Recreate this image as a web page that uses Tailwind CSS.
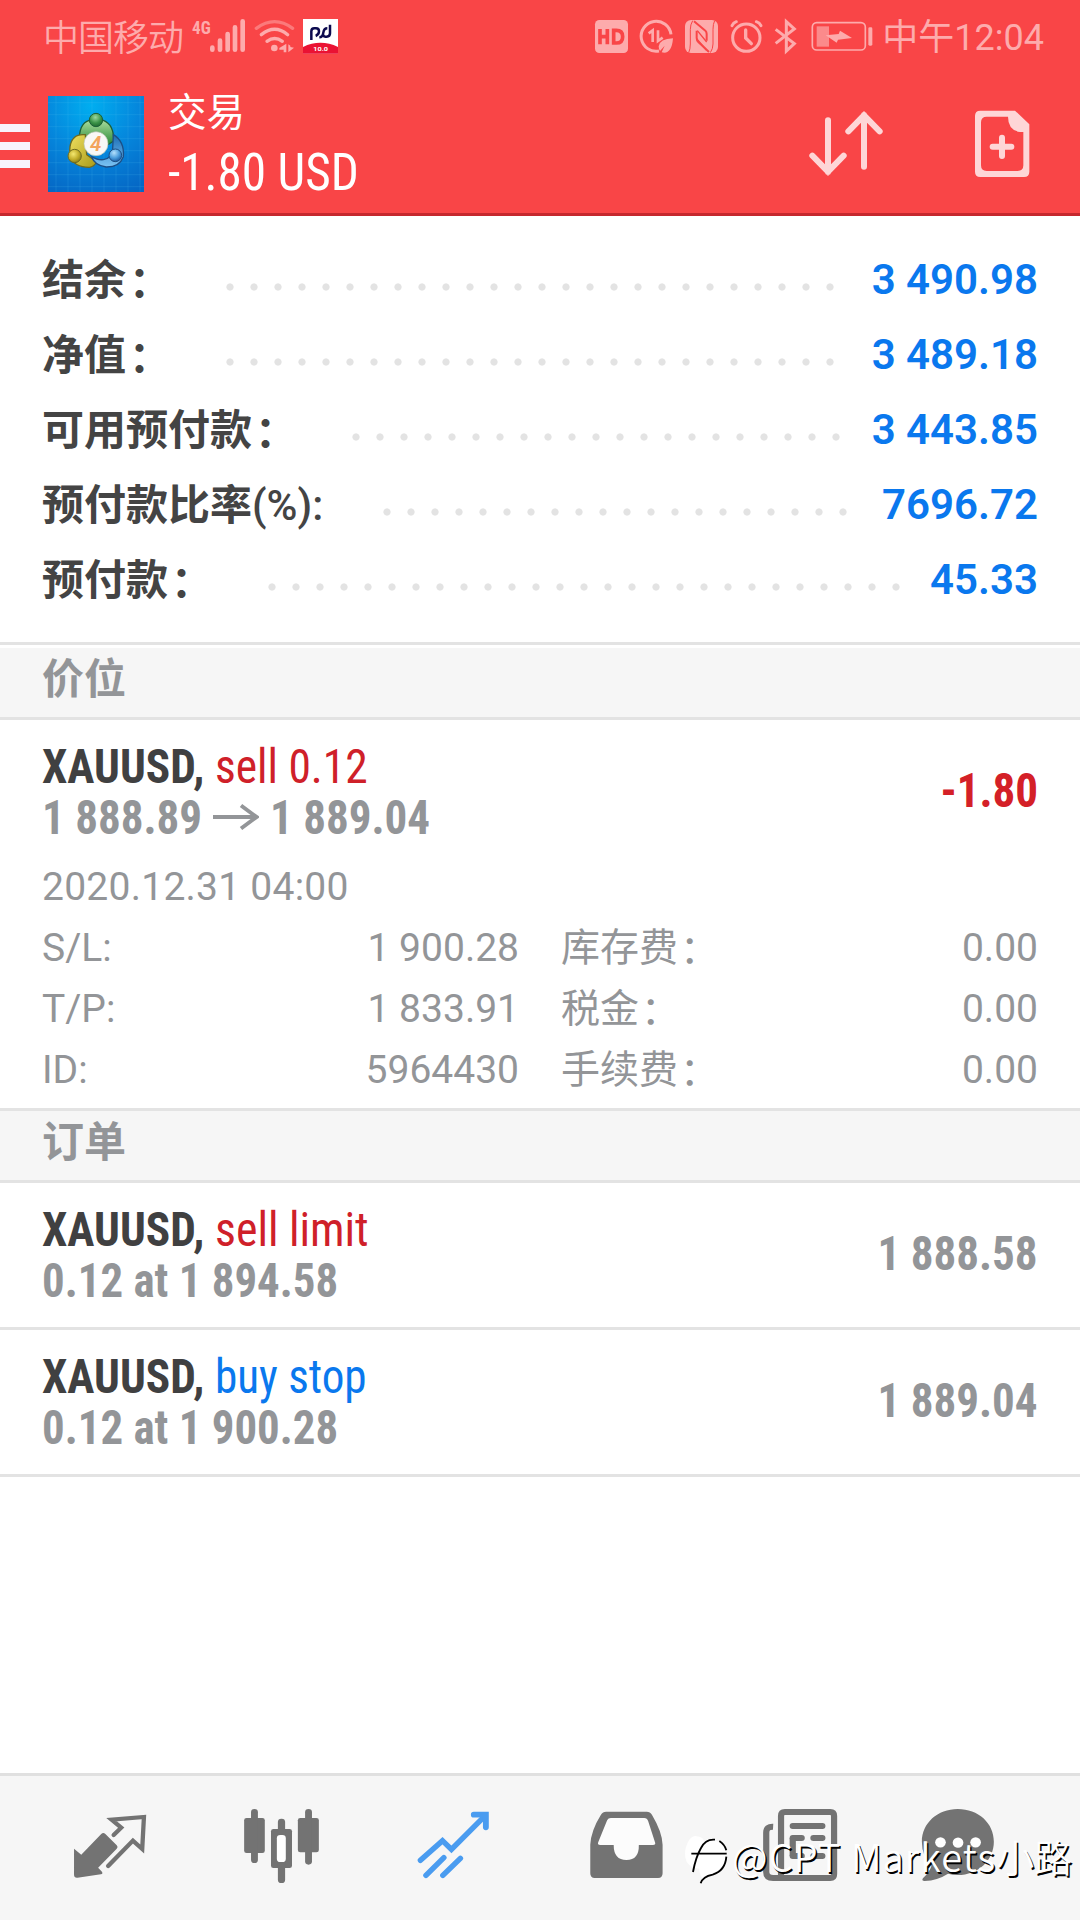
<!DOCTYPE html>
<html lang="zh-CN">
<head>
<meta charset="utf-8">
<title>交易</title>
<script src="https://cdn.jsdelivr.net/npm/@tailwindcss/browser@4"></script>
</head>
<body class="bg-white font-['Roboto','Noto_Sans_CJK_SC',sans-serif]">
<div class="relative w-[1080px] h-[1920px] overflow-hidden flex flex-col bg-white">

  <header class="h-[216px] bg-[#f94547] border-b-3 border-[#c5282e] flex flex-col shrink-0">
    <!-- status bar -->
    <div class="h-[72px] flex pl-[43px] pr-[36px] text-[#fdabac] text-[36px] leading-[76px] whitespace-nowrap">
      <span class="w-[147px] font-[350] tracking-[-1px] leading-[79px]">中国移动</span>
      <svg class="w-[150px] h-[72px] shrink-0" viewBox="570 0 450 216">
        <text x="576" y="101" font-size="57" font-weight="700" fill="#fdabac" textLength="56" lengthAdjust="spacingAndGlyphs" font-family="Roboto Condensed">4G</text>
        <g stroke="#fdabac" stroke-width="14" stroke-linecap="round" fill="none">
          <path d="M637 143v6M660 122v27M683 102v47M705 82v67M728 64v85"/>
        </g>
        <path d="M769 85Q824 45 878 85" stroke="#fb7a7b" stroke-width="10" fill="none" stroke-linecap="round"/>
        <path d="M784 104Q824 72 863 104M801 124Q824 107 847 124" stroke="#fdabac" stroke-width="10" fill="none" stroke-linecap="round"/>
        <circle cx="823" cy="144" r="10" fill="#fdabac"/>
        <path d="M859 131v26h-8v-8h-13v-5zM865 157v-24l6 4v4l11 2z" fill="#fdabac"/>
        <path d="M909 57h105v104H909z" fill="#fff"/>
        <path d="M909 161v-20Q961 116 1014 141v20z" fill="#ea1233"/>
        <path d="M934 120V94q0-9 9-9h5q9 0 9 9 0 10-10 14M958 112q10 0 12-14 2-13 12-13M975 110h5q10 0 10-10V74M976 110q-7 0-7-7" stroke="#0c0a4e" stroke-width="7.500" fill="none"/>
        <text x="940" y="153" font-size="18" font-weight="700" fill="#fff" textLength="44" lengthAdjust="spacingAndGlyphs">10.0</text>
      </svg>
      <svg class="ml-[250px] w-[290px] h-[72px] shrink-0" viewBox="90 0 870 216" fill="none">
        <rect x="105" y="60" width="99" height="99" rx="13" fill="#fdabac"/>
        <path d="M120 87v46M142 87v46M120 110h22M161 91v38h8q19 0 19-19t-19-19z" stroke="#f94547" stroke-width="11"/>
        <path d="M297 153A45 45 0 1 1 333 103" stroke="#fdabac" stroke-width="9"/>
        <path d="M266 100l12-9v35M294 91v32l14-10" stroke="#fdabac" stroke-width="8"/>
        <path d="M339 115q-40 2-43 24 0 8 4 14l14-16-9 20q30 8 34-42z" fill="#fdabac"/>
        <rect x="375" y="60" width="99" height="99" rx="18" fill="#fdabac"/>
        <path d="M398 62q-7 12-7 26v44q0 16-5 26M451 158q8-12 8-26V88q0-16 5-26" stroke="#f94547" stroke-width="3"/>
        <path d="M402 64l34 28q4 4 4 10v20M447 156l-32-30q-5-5-5-12V92" stroke="#f94547" stroke-width="6"/>
        <path d="M412 92l28 34M410 116l29 34" stroke="#f94547" stroke-width="4"/>
        <circle cx="559" cy="113" r="41" stroke="#fdabac" stroke-width="9"/>
        <path d="M516 77q4-9 13-12M589 65q10 3 14 12" stroke="#fdabac" stroke-width="9" stroke-linecap="round"/>
        <path d="M557 90v24l17 17" stroke="#fdabac" stroke-width="10" stroke-linecap="round"/>
        <path d="M647 88l56 43-24 22V65l24 22-56 43" stroke="#fdabac" stroke-width="9"/>
        <rect x="757" y="68" width="159" height="82" rx="13" stroke="#fdabac" stroke-width="5"/>
        <path d="M770 79h37v61h-37z" fill="#fb8a8b"/>
        <path d="M797 106l33 22 4-9 42-5-36-22-4 10z" fill="#fdabac"/>
        <rect x="925" y="82" width="12" height="55" rx="4" fill="#fdabac"/>
      </svg>
      <span class="ml-auto font-[390]">中午12:04</span>
    </div>

    <!-- app bar -->
    <div class="flex h-[141px] text-white">
      <div class="w-[30px] pt-[52px] flex flex-col gap-[10px]">
        <div class="h-2 bg-[#f8f3fb]"></div>
        <div class="h-2 bg-[#f8f3fb]"></div>
        <div class="h-2 bg-[#f8f3fb]"></div>
      </div>
      <svg class="ml-[18px] mt-6 w-24 h-24" viewBox="144 288 288 288">
        <defs>
          <radialGradient id="sky" cx=".45" cy=".1" r="1"><stop offset="0" stop-color="#00aef0"/><stop offset=".5" stop-color="#0586dc"/><stop offset="1" stop-color="#0566c4"/></radialGradient>
          <linearGradient id="gr" x2="0" y2="1"><stop stop-color="#a8dc9c"/><stop offset="1" stop-color="#2c8a38"/></linearGradient>
          <linearGradient id="ye" x2="1" y2="1"><stop stop-color="#f0e060"/><stop offset="1" stop-color="#a89a18"/></linearGradient>
          <linearGradient id="bl" x2="0" y2="1"><stop stop-color="#1a6cb4"/><stop offset="1" stop-color="#7cc4f4"/></linearGradient>
          <radialGradient id="gh" cx=".45" cy=".3" r=".7"><stop stop-color="#9cd8a0"/><stop offset=".6" stop-color="#3c9448"/><stop offset="1" stop-color="#1e6a30"/></radialGradient>
          <radialGradient id="yh" cx=".4" cy=".35" r=".7"><stop stop-color="#f4e870"/><stop offset=".6" stop-color="#c0ac28"/><stop offset="1" stop-color="#827a18"/></radialGradient>
          <radialGradient id="bh" cx=".4" cy=".3" r=".7"><stop stop-color="#b4e0fc"/><stop offset=".6" stop-color="#4a9cdc"/><stop offset="1" stop-color="#1c5ea4"/></radialGradient>
        </defs>
        <path fill="url(#sky)" d="M144 288h288v288H144z"/>
        <path d="M168 288v288M204 288v288M240 288v288M276 288v288M312 288v288M348 288v288M384 288v288M420 288v288M144 308h288M144 344h288M144 380h288M144 416h288M144 452h288M144 488h288M144 524h288M144 560h288" stroke="#5cc0f4" stroke-opacity=".25" stroke-width="2"/>
        <path d="M238 425q-2-55 30-64h42q32 12 31 62l-15 10-38-20-38 16z" fill="url(#gr)" stroke="#1d6038" stroke-width="4"/>
        <path d="M256 404q-40-4-46 36-2 20 2 30 10 32 56 32 14-2 22-16l-30-22z" fill="url(#ye)" stroke="#6e6a20" stroke-width="4"/>
        <path d="M340 404q34 20 30 66-12 32-52 31-34-4-44-32 20 12 36 10 26-4 28-32z" fill="url(#bl)" stroke="#1c4f86" stroke-width="4"/>
        <circle cx="288" cy="360" r="20" fill="url(#gh)" stroke="#1d6038" stroke-width="3"/>
        <circle cx="224" cy="468" r="20" fill="url(#yh)" stroke="#6e6a20" stroke-width="3"/>
        <circle cx="346" cy="466" r="19" fill="url(#bh)" stroke="#1c4f86" stroke-width="3"/>
        <circle cx="288" cy="431" r="36" fill="#f8f8f6" stroke="#b9c4b4" stroke-width="2"/>
        <text x="287" y="453" text-anchor="middle" font-size="62" font-style="italic" font-weight="600" fill="#f3a45c">4</text>
      </svg>
      <div class="ml-[24px] pt-[11px] leading-[60px] whitespace-nowrap">
        <div class="text-[38.5px]">交易</div>
        <div class="text-[51px] origin-left scale-x-[.966] font-['Roboto_Condensed','Roboto',sans-serif]">-1.80 USD</div>
      </div>
      <svg class="ml-auto mr-[20px] w-[260px] h-[141px]" viewBox="720 216 780 423" fill="none" stroke="#fed6d7">
        <path d="M804 361v155M757 467l47 48 47-48M912 500V345M865 394l47-48 47 48" stroke-width="18" stroke-linecap="round"/>
        <path fill="#fed6d7" fill-rule="evenodd" stroke="none" d="M1261 332h104l43 41v142q0 16-16 16h-131q-16 0-16-16V348q0-16 16-16zM1344 350h-64q-17 0-17 17v129q0 17 17 17h93q17 0 17-17V396h-10q-36-6-36-46z"/>
        <path d="M1326 413v55M1298 440h56" stroke-width="18" stroke-linecap="round"/>
      </svg>
    </div>
  </header>

  <!-- account summary -->
  <section class="h-[426px] shrink-0 px-[42px] pt-[26px] text-[42px] leading-[75px] font-bold text-[#444] whitespace-nowrap">
    <div class="flex h-[75px]"><span class="w-[176px] leading-[77px]">结余<span class="inline-block pl-[3px] translate-y-[2px]">：</span></span><i class="mt-[41px] h-2 w-[624px] bg-[radial-gradient(circle,#e3e3e3_3.2px,transparent_4px)] bg-[length:24px_8px]"></i><b class="ml-auto font-[640] text-[#0a78ee]">3 490.98</b></div>
    <div class="flex h-[75px]"><span class="w-[176px] leading-[77px]">净值<span class="inline-block pl-[3px] translate-y-[2px]">：</span></span><i class="mt-[41px] h-2 w-[624px] bg-[radial-gradient(circle,#e3e3e3_3.2px,transparent_4px)] bg-[length:24px_8px]"></i><b class="ml-auto font-[640] text-[#0a78ee]">3 489.18</b></div>
    <div class="flex h-[75px]"><span class="w-[302px] leading-[77px]">可用预付款<span class="inline-block pl-[3px] translate-y-[2px]">：</span></span><i class="mt-[41px] h-2 w-[504px] bg-[radial-gradient(circle,#e3e3e3_3.2px,transparent_4px)] bg-[length:24px_8px]"></i><b class="ml-auto font-[640] text-[#0a78ee]">3 443.85</b></div>
    <div class="flex h-[75px]"><span class="w-[333px] leading-[77px]">预付款比率<span class="font-medium">(%):</span></span><i class="mt-[41px] h-2 w-[480px] bg-[radial-gradient(circle,#e3e3e3_3.2px,transparent_4px)] bg-[length:24px_8px]"></i><b class="ml-auto font-[640] text-[#0a78ee]">7696.72</b></div>
    <div class="flex h-[75px]"><span class="w-[218px] leading-[77px]">预付款<span class="inline-block pl-[3px] translate-y-[2px]">：</span></span><i class="mt-[41px] h-2 w-[648px] bg-[radial-gradient(circle,#e3e3e3_3.2px,transparent_4px)] bg-[length:24px_8px]"></i><b class="ml-auto font-[640] text-[#0a78ee]">45.33</b></div>
  </section>

  <h2 class="h-[78px] shrink-0 border-y-3 border-[#e3e3e3] pt-[3px] text-[42px] leading-[63px] font-bold text-[#939598]"><span class="block h-[69px] bg-[#f6f6f6] px-[42px]">价位</span></h2>

  <!-- open position -->
  <section class="h-[388px] shrink-0 px-[42px] pt-[21px] whitespace-nowrap">
    <div class="flex items-center justify-between text-[48px] leading-[51px] font-bold font-['Roboto_Condensed','Roboto',sans-serif]">
      <div>
        <div class="flex text-[#404041]"><span class="w-[173px] origin-left scale-x-[.944]">XAUUSD,</span><span class="origin-left scale-x-[.948] font-normal text-[#cf2029]">sell 0.12</span></div>
        <div class="flex text-[#939598]"><span class="w-[171px] origin-left scale-x-[.938]">1 888.89</span><svg class="mt-[11px] w-[46px] h-[28px]" viewBox="0 0 46 28" fill="none" stroke="#939598" stroke-width="4"><path d="M0 14h43M28 2.500L43.500 14 28 25.500"/></svg><span class="ml-[11px] origin-left scale-x-[.938]">1 889.04</span></div>
      </div>
      <div class="pb-[3px] text-[#d42027] origin-right scale-x-[.938]">-1.80</div>
    </div>
    <div class="mt-[14px] text-[39px] leading-[61px] font-[390] text-[#939598]">
      <div class="tracking-[0.25px]">2020.12.31 04:00</div>
      <div class="grid grid-cols-[477px_1fr] gap-x-[42px]">
        <div class="flex justify-between"><span>S/L:</span><span>1 900.28</span></div>
        <div class="flex justify-between"><span>库存费<span class="inline-block pl-0.5 translate-y-[2px]">：</span></span><span>0.00</span></div>
        <div class="flex justify-between"><span>T/P:</span><span>1 833.91</span></div>
        <div class="flex justify-between"><span>税金<span class="inline-block pl-0.5 translate-y-[2px]">：</span></span><span>0.00</span></div>
        <div class="flex justify-between"><span>ID:</span><span>5964430</span></div>
        <div class="flex justify-between"><span>手续费<span class="inline-block pl-0.5 translate-y-[2px]">：</span></span><span>0.00</span></div>
      </div>
    </div>
  </section>

  <h2 class="h-[75px] shrink-0 border-y-3 border-[#e3e3e3] bg-[#f6f6f6] px-[42px] text-[42px] leading-[63px] font-bold text-[#939598]">订单</h2>

  <!-- pending orders -->
  <section class="shrink-0 text-[48px] leading-[51px] font-bold text-[#939598] font-['Roboto_Condensed','Roboto',sans-serif] whitespace-nowrap">
    <div class="h-[147px] border-b-3 border-[#e3e3e3] px-[42px] pt-[21px] pb-[21px] flex items-center justify-between">
      <div>
        <div class="flex text-[#404041]"><span class="w-[173px] origin-left scale-x-[.944]">XAUUSD,</span><span class="origin-left scale-x-[.955] font-normal text-[#cf2029]">sell limit</span></div>
        <div class="origin-left scale-x-[.935]">0.12 at 1 894.58</div>
      </div>
      <div class="pb-[3px] origin-right scale-x-[.938]">1 888.58</div>
    </div>
    <div class="h-[147px] border-b-3 border-[#e3e3e3] px-[42px] pt-[21px] pb-[21px] flex items-center justify-between">
      <div>
        <div class="flex text-[#404041]"><span class="w-[173px] origin-left scale-x-[.944]">XAUUSD,</span><span class="origin-left scale-x-[.94] font-normal text-[#0a78ee]">buy stop</span></div>
        <div class="origin-left scale-x-[.935]">0.12 at 1 900.28</div>
      </div>
      <div class="pb-[3px] origin-right scale-x-[.938]">1 889.04</div>
    </div>
  </section>

  <!-- bottom navigation -->
  <nav class="mt-auto h-[147px] shrink-0 border-t-3 border-[#e0e0e0] bg-[#f6f6f6] px-6 flex">
    <svg class="w-[172px] h-36" viewBox="69.7 48 499.500 432" preserveAspectRatio="none" fill="#737373">
      <path d="M215 266l21 18 58-62q6-6 12 0l33 34q5 5 0 10l-54 57 11 12q4 6-3 8l-68 10q-10 1-10-9z"/>
      <path d="M330 225l22-22-28-24 94-8-5 96-27-25-72 76" fill="none" stroke="#737373" stroke-width="12.500" stroke-linecap="round" stroke-linejoin="miter"/>
    </svg>
    <svg class="w-[172px] h-36" viewBox="569.2 48 499.500 432" preserveAspectRatio="none" fill="#737373">
      <rect x="709" y="174" width="60" height="105" rx="7"/><rect x="729" y="147" width="20" height="162" rx="10"/>
      <rect x="865" y="174" width="61" height="103" rx="7"/><rect x="886" y="147" width="20" height="167" rx="10"/>
      <rect x="787" y="207" width="61" height="117" rx="7"/><rect x="807" y="176" width="21" height="193" rx="10"/>
      <rect x="804" y="225" width="26" height="81" rx="10" fill="#fff"/>
    </svg>
    <svg class="w-[172px] h-36" viewBox="1068.7 48 499.500 432" preserveAspectRatio="none" fill="none" stroke="#4a9cf0" stroke-width="16">
      <path d="M1221 301l64-59 26 26 98-101M1237 346l52-53M1286 346l51-51" stroke-linecap="round"/>
      <path d="M1376 164h35v38" stroke-width="17" stroke-linecap="round"/>
    </svg>
    <svg class="w-[172px] h-36" viewBox="0 48 499.500 432" preserveAspectRatio="none" fill="#737373">
      <path d="M192 155h118q10 0 15 9 30 52 31 90v86q0 14-13 14H159q-13 0-13-14v-86q2-42 31-90 5-9 15-9z"/>
      <path d="M206 174q-8 0-11 7l-26 66q-3 8 6 8h39q0 45 37 45t36-45h41q9 0 6-8l-20-64q-3-9-11-9z" fill="#fcfcfc"/>
    </svg>
    <svg class="w-[172px] h-36" viewBox="499.500 48 499.500 432" preserveAspectRatio="none" fill="none" stroke="#737373" stroke-width="18">
      <path d="M677 200q-20-1-20 18v118q0 18 20 18h166q11 0 11-12V168q0-12-11-12H711q-11 0-11 12v186"/>
      <path d="M734 198h86M734 234h26M794 234h26M734 288h26M794 288h26" stroke-linecap="round"/>
      <path d="M734 234v54"/>
    </svg>
    <svg class="w-[172px] h-36" viewBox="999 48 499.500 432" preserveAspectRatio="none" fill="#737373">
      <path d="M1213 147c60 0 105 42 105 98s-46 100-105 100q-14 0-28-4-30 20-68 22-10 0-5-8 20-20 25-38-28-28-28-72c0-56 46-98 104-98z"/>
      <g fill="#fff"><circle cx="1163" cy="247" r="15.500"/><circle cx="1214" cy="248" r="15.500"/><circle cx="1265" cy="247" r="15.500"/></g>
    </svg>
  </nav>

  <!-- author watermark -->
  <div class="absolute left-[680px] top-[1830px] flex text-white whitespace-nowrap">
    <svg class="w-[52px] h-[60px]" viewBox="0 90 156 180" fill="none">
      <path d="M46 108q28 2 26 20 24-16 48 0 18 16 18 40 0 36-40 56-22 6-28 16-12-16-12-34-26-2-38-20-12-30 4-60 8-16 22-18z" fill="#fff"/>
      <path d="M39 216q8-44 24-72 14-28 42-25M34 161h106M118 123q16 10 21 28M62 250q6-20 36-26 38-12 41-54" stroke="#000" stroke-width="5.500"/>
    </svg>
    <span class="font-['Noto_Sans_CJK_SC',sans-serif] font-[350] text-[38px] leading-[51px] [text-shadow:1.5px_1.5px_0_#000]"><span class="tracking-[1.1px]">@CPT Markets</span>小路</span>
  </div>
</div>
</body>
</html>
